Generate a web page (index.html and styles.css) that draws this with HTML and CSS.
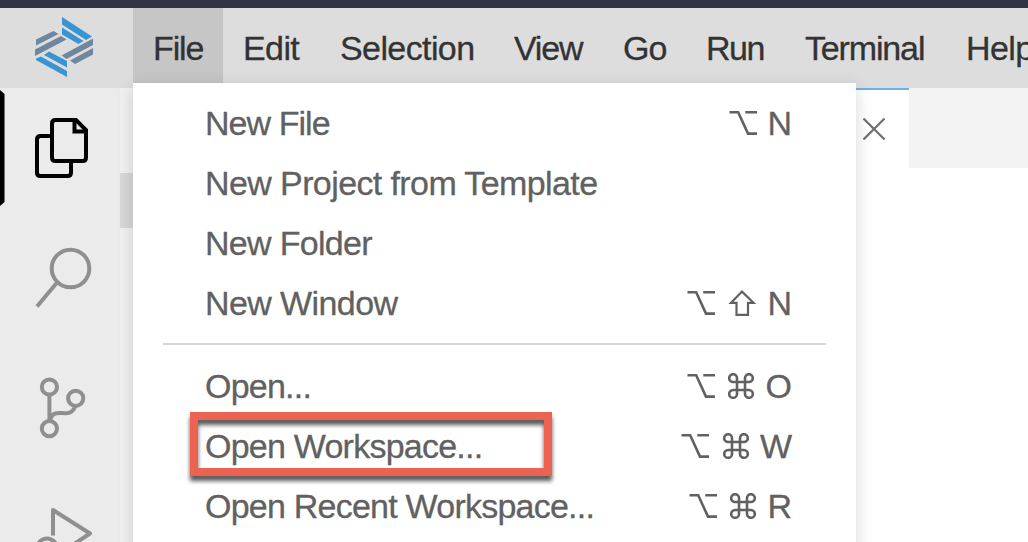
FILE: index.html
```html
<!DOCTYPE html>
<html lang="en">
<head>
<meta charset="utf-8">
<title>File menu</title>
<link rel="stylesheet" href="styles.css">
</head>
<body>
<svg class="defs" aria-hidden="true">
  <symbol id="opt" viewBox="0 0 28 24"><path d="M0.500 1.300H9.200L19 22.600H28M16.300 1.300H28"/></symbol>
  <symbol id="shift" viewBox="0 0 28 26"><path d="M14 1.600L3 12.800H8.500V24.800H20V12.800H25.500Z"/></symbol>
  <symbol id="cmd" viewBox="0 0 26 26"><path d="M9 9V5.100A3.900 3.900 0 1 0 5.100 9H20.900A3.900 3.900 0 1 0 17 5.100V20.900A3.900 3.900 0 1 0 20.900 17H5.100A3.900 3.900 0 1 0 9 20.900Z"/></symbol>
</svg>
<div class="window">
  <div class="titlebar"></div>
  <header class="menubar">
    <div class="brand">
      <svg class="logo" width="60" height="62" viewBox="0 0 60 62">
        <g fill="#3b93d2"><path d="M27 0L57 19.500L51 23L27 7.500Z"/><path d="M27 10.500L48.500 24L43.500 27L27 17.500Z"/><path d="M14 34.500L32 44V50.500L9 38Z"/><path d="M1 41.500L6 39.500L32 54V60L1 43Z"/></g>
        <g fill="#6f879e"><path d="M1 22.500L18.500 14L23.500 17L1 28.500Z"/><path d="M0 32.500L26 19L31.500 22.500L0 39Z"/><path d="M26.500 38.500L58 21.500V28L31.500 42Z"/><path d="M35 43.500L58 31V37.500L40 47Z"/></g>
      </svg>
    </div>
    <nav class="menus">
      <span class="menu file active">File</span>
      <span class="menu edit">Edit</span>
      <span class="menu selection">Selection</span>
      <span class="menu view">View</span>
      <span class="menu go">Go</span>
      <span class="menu run">Run</span>
      <span class="menu terminal">Terminal</span>
      <span class="menu help">Help</span>
    </nav>
  </header>
  <main class="workbench">
    <aside class="activity">
      <div class="tool current">
        <svg width="120" height="120" viewBox="0 0 120 120" fill="none" stroke="#000" stroke-width="4"><path d="M0 2L4.500 6V114L0 118Z" fill="#000" stroke="none"/><path d="M52 48H40.500Q37 48 37 51.500V84.500Q37 88 40.500 88H67.500Q71 88 71 84.500V74"/><path d="M55.500 32H76L86 42V69.500Q86 73 82.500 73H55.500Q52 73 52 69.500V35.500Q52 32 55.500 32Z"/><path d="M74.500 32V43.500H86"/></svg>
      </div>
      <div class="tool">
        <svg width="120" height="120" viewBox="0 0 120 120" fill="none" stroke="#8f8f8f" stroke-width="4"><circle cx="70.500" cy="60.500" r="18.800"/><path d="M57.500 74L37 98.500"/></svg>
      </div>
      <div class="tool">
        <svg width="120" height="120" viewBox="0 0 120 120" fill="none" stroke="#8f8f8f" stroke-width="4"><circle cx="49.400" cy="59" r="7.600"/><circle cx="75.700" cy="70.300" r="7.600"/><circle cx="49.400" cy="100.600" r="7.600"/><path d="M49.400 67V93M50 92C53 82 60 86 68 85C73 84 74 81 75.500 78"/></svg>
      </div>
      <div class="tool">
        <svg width="120" height="120" viewBox="0 0 120 120" fill="none" stroke="#8f8f8f" stroke-width="4" stroke-linejoin="round"><path d="M53 87.500V62L90 85.500L53 110"/><circle cx="47" cy="100.500" r="10"/></svg>
      </div>
    </aside>
    <section class="explorer"><div class="selected-row"></div></section>
    <section class="editor">
      <div class="tabs">
        <div class="tab"><svg width="22" height="22" viewBox="0 0 22 22"><path d="M1.200 1.200L20.800 20.800M20.800 1.200L1.200 20.800" fill="none" stroke="#707070" stroke-width="2.300" stroke-linecap="round"/></svg></div>
      </div>
    </section>
  </main>
</div>
<div class="dropdown">
  <div class="item"><span class="label new-file">New File</span><span class="keys"><svg class="k o"><use href="#opt"/></svg><b>N</b></span></div>
  <div class="item"><span class="label">New Project from Template</span></div>
  <div class="item"><span class="label new-folder">New Folder</span></div>
  <div class="item"><span class="label">New Window</span><span class="keys"><svg class="k o"><use href="#opt"/></svg><svg class="k s"><use href="#shift"/></svg><b>N</b></span></div>
  <div class="separator"></div>
  <div class="item"><span class="label open">Open...</span><span class="keys"><svg class="k o"><use href="#opt"/></svg><svg class="k c"><use href="#cmd"/></svg><b>O</b></span></div>
  <div class="item"><span class="label open">Open Workspace...</span><span class="keys"><svg class="k o"><use href="#opt"/></svg><svg class="k c"><use href="#cmd"/></svg><b>W</b></span><i class="highlight"></i></div>
  <div class="item"><span class="label open">Open Recent Workspace...</span><span class="keys"><svg class="k o"><use href="#opt"/></svg><svg class="k c"><use href="#cmd"/></svg><b>R</b></span></div>
</div>
</body>
</html>
```
FILE: styles.css
```css
* { box-sizing: border-box; }
body {
  margin: 0;
  width: 1028px;
  height: 542px;
  overflow: hidden;
  position: relative;
  background: #fff;
  font: 34px/60px "Liberation Sans", Arial, sans-serif;
  letter-spacing: -0.6px;
  -webkit-text-stroke: 0.3px currentColor;
}
.defs { position: absolute; width: 0; height: 0; }
.window { display: flex; flex-direction: column; height: 542px; }
.titlebar { height: 8px; flex: none; background: #323443; }
.menubar { height: 80px; flex: none; display: flex; background: #ddd; overflow: hidden; }
.brand { width: 133px; flex: none; padding: 9px 0 0 35px; }
.logo { display: block; }
.menus { display: flex; }
.menu { flex: none; padding-left: 20px; line-height: 81px; color: #333; white-space: nowrap; }
.active { background: #c6c6c6; }
.file { width: 90px; letter-spacing: -1.1px; }
.edit { width: 97px; }
.selection { width: 174px; }
.view { width: 109px; letter-spacing: -1.2px; }
.go { width: 83px; letter-spacing: -1px; }
.run { width: 99px; letter-spacing: -1.5px; }
.terminal { width: 160px; letter-spacing: -1.15px; }
.help { width: 90px; padding-left: 21px; }
.workbench { flex: 1; display: flex; min-height: 0; overflow: hidden; }
.activity { width: 120px; flex: none; background: #ebebeb; }
.tool { height: 120px; }
.tool svg { display: block; }
.explorer { width: 13px; flex: none; padding-top: 85px; background: #f1f1f1; }
.selected-row { height: 55px; background: #d8d8d8; }
.editor { flex: 1; }
.tabs { height: 80px; background: #f3f3f3; }
.tab {
  width: 776px;
  height: 80px;
  padding: 28px 0 0 730px;
  background: #fff;
  border-top: 2px solid #6cb0f0;
}
.tab svg { display: block; }
.dropdown {
  position: absolute;
  left: 133px;
  top: 83px;
  width: 723px;
  height: 480px;
  padding: 10px 64px 0 72px;
  background: #fff;
  color: #616161;
  box-shadow: 0 4px 16px rgba(0, 0, 0, 0.16);
}
.item { position: relative; height: 60px; display: flex; justify-content: space-between; white-space: nowrap; }
.new-file { letter-spacing: -0.95px; }
.new-folder { letter-spacing: -0.7px; }
.open { letter-spacing: -0.77px; }
.separator { height: 23px; margin: 0 -34px 0 -42px; padding-top: 10px; }
.separator::after { content: ""; display: block; height: 2px; background: #d4d4d4; }
.keys { display: flex; align-items: center; }
.keys b { font-weight: 400; letter-spacing: 0; }
.k { display: block; position: relative; left: 0.6px; fill: none; stroke: #616161; stroke-width: 2.6px; }
.o { width: 28px; height: 24px; margin-right: 11px; }
.s { width: 28px; height: 26px; margin: 0 11px 0 3px; stroke-width: 2.2px; left: 0; }
.c { width: 26px; height: 26px; margin: 0 11px 0 3.5px; left: -0.4px; }
.highlight {
  position: absolute;
  left: -15px;
  top: -4px;
  width: 362px;
  height: 64px;
  border: 8px solid #ed6352;
  filter: drop-shadow(0 5px 2px rgba(0, 0, 0, 0.65));
}
```
